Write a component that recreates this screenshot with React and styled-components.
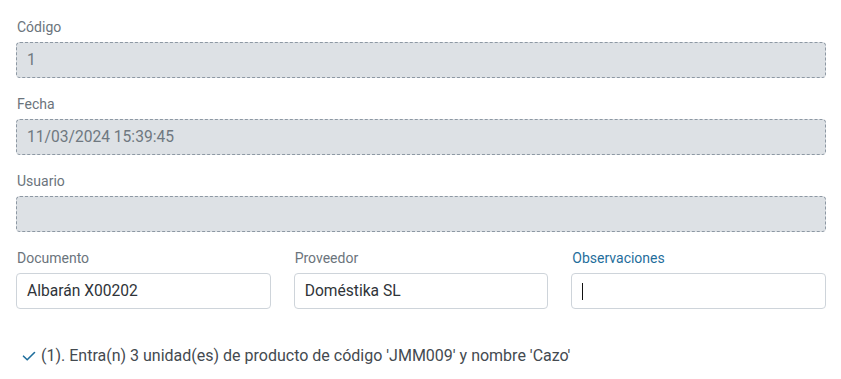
import React from "react";
import styled, { createGlobalStyle } from "styled-components";

const Global = createGlobalStyle`
  html, body { margin: 0; padding: 0; background: #ffffff; }
  body { font-family: Roboto, "Liberation Sans", sans-serif; }
`;

const Page = styled.div`
  padding: 19px 15px 0 16px;
`;

const Group = styled.div`
  display: flex;
  flex-direction: column;
  margin-bottom: 18px;
`;

const Label = styled.label`
  font-size: 14px;
  line-height: 16px;
  margin-bottom: 7px;
  padding-left: 1px;
  color: ${(p) => (p.$active ? "#1f6e9c" : "#6b747c")};
`;

const Field = styled.div`
  box-sizing: border-box;
  height: 36px;
  border-radius: 4px;
  display: flex;
  align-items: center;
  padding: 0 10px;
  font-size: 15.6px;
  ${(p) =>
    p.$disabled
      ? `background: #dde1e5; border: 1px dashed #8d98a3; color: #6f7880;`
      : `background: #ffffff; border: 1px solid #ced4da; color: #2f3439;`}
`;

const Caret = styled.span`
  display: inline-block;
  width: 1px;
  height: 17px;
  background: #111;
`;

const Row = styled.div`
  display: grid;
  grid-template-columns: 1fr 1fr 1fr;
  column-gap: 23px;
`;

const RowGroup = styled(Group)`
  margin-bottom: 0;
`;

const Message = styled.div`
  margin-top: 37px;
  padding-left: 6px;
  display: flex;
  align-items: center;
  gap: 5px;
  font-size: 16px;
  line-height: 20px;
  color: #444a50;
`;

const Check = () => (
  <svg width="14" height="12" viewBox="0 0 14 12" fill="none">
    <path d="M1.5 6.2 L5.2 9.8 L12.5 2.5" stroke="#1f6e9c" strokeWidth="1.6" strokeLinecap="round" strokeLinejoin="round" />
  </svg>
);

export default function App() {
  return (
    <>
      <Global />
      <Page>
        <Group>
          <Label>Código</Label>
          <Field $disabled>1</Field>
        </Group>
        <Group>
          <Label>Fecha</Label>
          <Field $disabled>11/03/2024 15:39:45</Field>
        </Group>
        <Group>
          <Label>Usuario</Label>
          <Field $disabled />
        </Group>
        <Row>
          <RowGroup>
            <Label>Documento</Label>
            <Field>Albarán X00202</Field>
          </RowGroup>
          <RowGroup>
            <Label>Proveedor</Label>
            <Field>Doméstika SL</Field>
          </RowGroup>
          <RowGroup>
            <Label $active>Observaciones</Label>
            <Field>
              <Caret />
            </Field>
          </RowGroup>
        </Row>
        <Message>
          <Check />
          <span>(1). Entra(n) 3 unidad(es) de producto de código 'JMM009' y nombre 'Cazo'</span>
        </Message>
      </Page>
    </>
  );
}
